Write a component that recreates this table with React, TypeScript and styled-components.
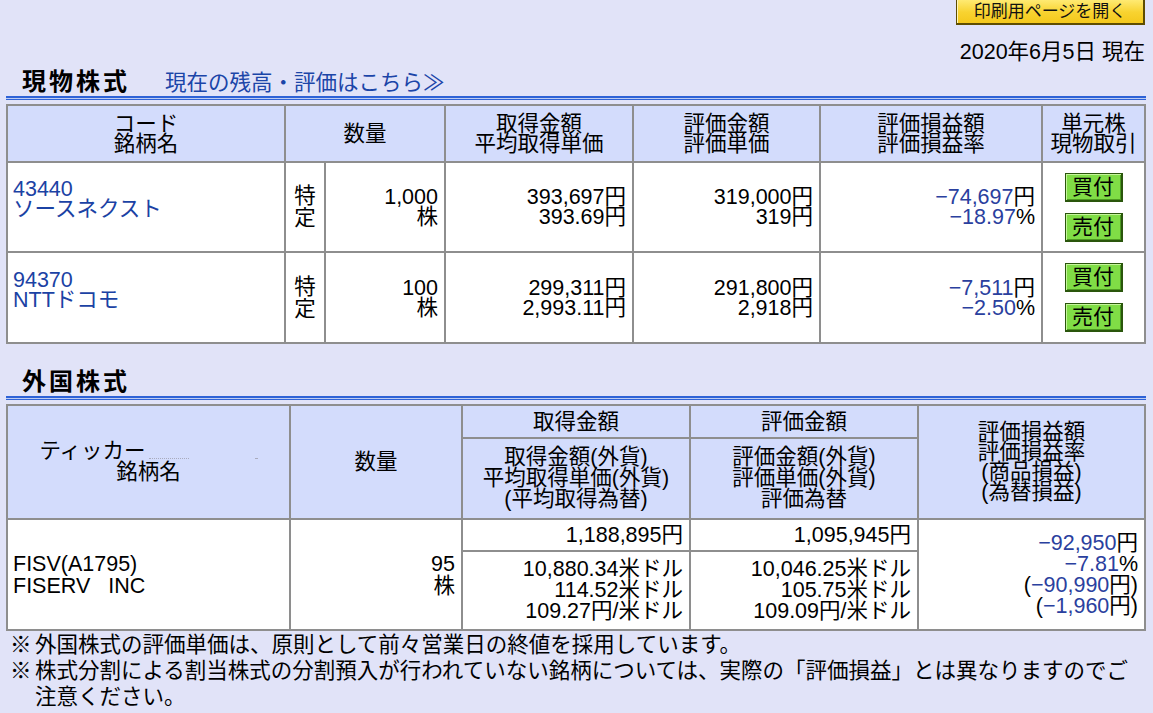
import React from "react";
import styled, { createGlobalStyle } from "styled-components";

const GlobalStyle = createGlobalStyle`
  html, body { margin: 0; padding: 0; background: #e1e3f8; }
  body {
    font-family: "Liberation Sans", "Noto Sans CJK JP", sans-serif;
    font-size: 21.5px;
    color: #000;
    overflow: hidden;
  }
`;

const Page = styled.div`
  width: 1140px;
  padding-left: 6px;
`;

const TopBar = styled.div`
  display: flex;
  justify-content: flex-end;
  margin-top: -2px;
`;

const PrintButton = styled.button`
  box-sizing: border-box;
  width: 189px;
  height: 27px;
  margin-right: 1px;
  padding: 0;
  font-family: "Liberation Sans", "Noto Sans CJK JP", sans-serif;
  font-size: 17px;
  line-height: 25px;
  color: #111;
  background: linear-gradient(#ffec78, #f8d330 55%, #f4c81c);
  border: 1px solid #5e4d00;
  border-right-width: 2px;
  border-bottom-width: 2px;
  box-shadow: inset 1px 1px 0 #fff5b8;
  cursor: pointer;
`;

const DateLine = styled.div`
  margin-top: 15px;
  text-align: right;
  line-height: 24px;
  padding-right: 1px;
`;

const SectionHead = styled.div<{ $gap: number }>`
  display: flex;
  align-items: baseline;
  margin-top: ${(p) => p.$gap}px;
  height: 28px;
  padding-left: 16px;
`;

const Heading = styled.h2`
  margin: 0;
  font-size: 24px;
  font-weight: bold;
  letter-spacing: 3px;
  line-height: 28px;
`;

const HeadLink = styled.a`
  margin-left: 35px;
  color: #1b45a8;
  text-decoration: none;
  line-height: 28px;
`;

const Rule = styled.div`
  box-sizing: border-box;
  height: 4px;
  border-top: 2px solid #2e62d6;
  border-bottom: 1px solid #2e62d6;
  background: #bccbf2;
  margin-bottom: 4px;
`;

const GridTable = styled.div<{ $cols: string; $rows: string }>`
  display: grid;
  grid-template-columns: ${(p) => p.$cols};
  grid-template-rows: ${(p) => p.$rows};
  gap: 2px;
  padding: 2px;
  background: #8e8e8e;
`;

type Align = "left" | "center" | "right";

const Cell = styled.div<{
  $head?: boolean;
  $align?: Align;
  $r?: string;
  $c?: string;
  $lh?: number;
  $pb?: number;
}>`
  display: flex;
  flex-direction: column;
  justify-content: center;
  align-items: ${(p) =>
    p.$align === "left" ? "flex-start" : p.$align === "right" ? "flex-end" : "center"};
  text-align: ${(p) => p.$align || "center"};
  background: ${(p) => (p.$head ? "#d3dcfc" : "#ffffff")};
  padding: 0 6px ${(p) => p.$pb || 0}px ${(p) => (p.$align === "left" ? 5 : 6)}px;
  line-height: ${(p) => p.$lh || 20}px;
  white-space: nowrap;
  ${(p) => (p.$r ? `grid-row: ${p.$r};` : "")}
  ${(p) => (p.$c ? `grid-column: ${p.$c};` : "")}
`;

const CodeLink = styled.a`
  color: #1b42a4;
  text-decoration: none;
`;

const Neg = styled.span`
  color: #2a409e;
`;

const TradeStack = styled.div`
  display: flex;
  flex-direction: column;
  gap: 11px;
  align-items: center;
`;

const TradeButton = styled.button`
  box-sizing: border-box;
  width: 58px;
  height: 29px;
  padding: 0;
  font-family: "Liberation Sans", "Noto Sans CJK JP", sans-serif;
  font-size: 21px;
  line-height: 24px;
  color: #000;
  background: #80dd46;
  border: 1px solid #2a560c;
  border-right-width: 2px;
  border-bottom-width: 2px;
  box-shadow: inset 1px 1px 0 #c6f59c, inset -1px -1px 0 #4d9a22;
  cursor: pointer;
`;

const Spacer = styled.span`
  display: inline-block;
  width: 112px;
  height: 1px;
  vertical-align: middle;
  position: relative;
  top: 6px;
`;

const Dots = styled.span<{ $w: number; $ml: number }>`
  display: inline-block;
  width: ${(p) => p.$w}px;
  margin-left: ${(p) => p.$ml}px;
  border-bottom: 1px dotted #a9abbd;
  vertical-align: top;
`;

const Notes = styled.ul`
  list-style: none;
  margin: 0;
  padding: 1px 0 0 4px;
`;

const Note = styled.li`
  display: flex;
  line-height: 26px;
  white-space: nowrap;
`;

const Mark = styled.span`
  flex: 0 0 25px;
`;

const holdings = [
  {
    code: "43440",
    name: "ソースネクスト",
    qty: "1,000",
    cost: "393,697円",
    avg: "393.69円",
    val: "319,000円",
    unit: "319円",
    pl: "−74,697",
    rate: "−18.97",
  },
  {
    code: "94370",
    name: "NTTドコモ",
    qty: "100",
    cost: "299,311円",
    avg: "2,993.11円",
    val: "291,800円",
    unit: "2,918円",
    pl: "−7,511",
    rate: "−2.50",
  },
];

export default function App() {
  return (
    <Page>
      <GlobalStyle />
      <TopBar>
        <PrintButton>印刷用ページを開く</PrintButton>
      </TopBar>
      <DateLine>2020年6月5日 現在</DateLine>

      <SectionHead $gap={4}>
        <Heading>現物株式</Heading>
        <HeadLink href="#">現在の残高・評価はこちら≫</HeadLink>
      </SectionHead>
      <Rule />
      <GridTable
        $cols="276px 38px 118px 186px 185px 220px 101px"
        $rows="55px 88px 89px"
      >
        <Cell $head>
          コード
          <br />
          銘柄名
        </Cell>
        <Cell $head $c="span 2">
          数量
        </Cell>
        <Cell $head>
          取得金額
          <br />
          平均取得単価
        </Cell>
        <Cell $head>
          評価金額
          <br />
          評価単価
        </Cell>
        <Cell $head>
          評価損益額
          <br />
          評価損益率
        </Cell>
        <Cell $head>
          単元株
          <br />
          現物取引
        </Cell>
        {holdings.map((h) => (
          <React.Fragment key={h.code}>
            <Cell $align="left" $pb={16}>
              <CodeLink href="#">
                {h.code}
                <br />
                {h.name}
              </CodeLink>
            </Cell>
            <Cell $lh={22}>
              特
              <br />
              定
            </Cell>
            <Cell $align="right">
              {h.qty}
              <br />株
            </Cell>
            <Cell $align="right">
              {h.cost}
              <br />
              {h.avg}
            </Cell>
            <Cell $align="right">
              {h.val}
              <br />
              {h.unit}
            </Cell>
            <Cell $align="right">
              <span>
                <Neg>{h.pl}</Neg>円
              </span>
              <span>
                <Neg>{h.rate}</Neg>%
              </span>
            </Cell>
            <Cell>
              <TradeStack>
                <TradeButton>買付</TradeButton>
                <TradeButton>売付</TradeButton>
              </TradeStack>
            </Cell>
          </React.Fragment>
        ))}
      </GridTable>

      <SectionHead $gap={24}>
        <Heading>外国株式</Heading>
      </SectionHead>
      <Rule />
      <GridTable $cols="281px 170px 226px 226px 225px" $rows="31px 79px 30px 77px">
        <Cell $head $r="1 / span 2" $c="1" $lh={21}>
          <span>
            ティッカー
            <Spacer>
              <Dots $w={40} $ml={2} />
              <Dots $w={2} $ml={66} />
            </Spacer>
          </span>
          <span>銘柄名</span>
        </Cell>
        <Cell $head $r="1 / span 2" $c="2">
          数量
        </Cell>
        <Cell $head $r="1" $c="3">
          取得金額
        </Cell>
        <Cell $head $r="1" $c="4">
          評価金額
        </Cell>
        <Cell $head $r="1 / span 2" $c="5" $lh={20}>
          評価損益額
          <br />
          評価損益率
          <br />
          (商品損益)
          <br />
          (為替損益)
        </Cell>
        <Cell $head $r="2" $c="3" $lh={21}>
          取得金額(外貨)
          <br />
          平均取得単価(外貨)
          <br />
          (平均取得為替)
        </Cell>
        <Cell $head $r="2" $c="4" $lh={21}>
          評価金額(外貨)
          <br />
          評価単価(外貨)
          <br />
          評価為替
        </Cell>

        <Cell $align="left" $r="3 / span 2" $c="1" $lh={22}>
          FISV(A1795)
          <br />
          FISERV{"\u00a0\u00a0\u00a0"}INC
        </Cell>
        <Cell $align="right" $r="3 / span 2" $c="2" $lh={22}>
          95
          <br />株
        </Cell>
        <Cell $align="right" $r="3" $c="3">
          1,188,895円
        </Cell>
        <Cell $align="right" $r="3" $c="4">
          1,095,945円
        </Cell>
        <Cell $align="right" $r="4" $c="3" $lh={21}>
          10,880.34米ドル
          <br />
          114.52米ドル
          <br />
          109.27円/米ドル
        </Cell>
        <Cell $align="right" $r="4" $c="4" $lh={21}>
          10,046.25米ドル
          <br />
          105.75米ドル
          <br />
          109.09円/米ドル
        </Cell>
        <Cell $align="right" $r="3 / span 2" $c="5" $lh={21}>
          <span>
            <Neg>−92,950</Neg>円
          </span>
          <span>
            <Neg>−7.81</Neg>%
          </span>
          <span>
            (<Neg>−90,990</Neg>円)
          </span>
          <span>
            (<Neg>−1,960</Neg>円)
          </span>
        </Cell>
      </GridTable>

      <Notes>
        <Note>
          <Mark>※</Mark>
          <span>外国株式の評価単価は、原則として前々営業日の終値を採用しています。</span>
        </Note>
        <Note>
          <Mark>※</Mark>
          <span>
            株式分割による割当株式の分割預入が行われていない銘柄については、実際の「評価損益」とは異なりますのでご
            <br />
            注意ください。
          </span>
        </Note>
      </Notes>
    </Page>
  );
}
